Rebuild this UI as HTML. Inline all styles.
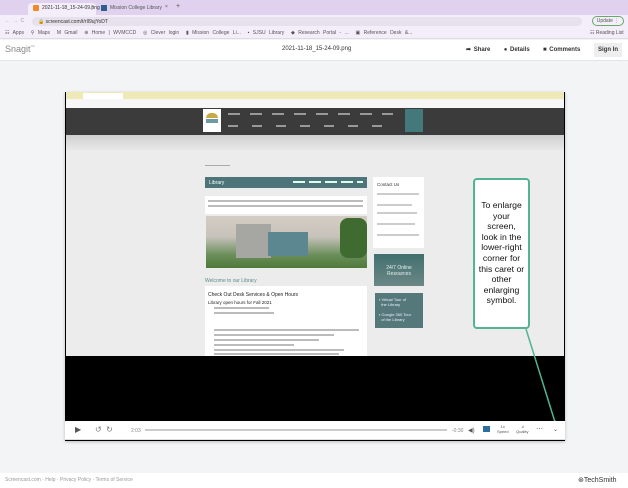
<!DOCTYPE html>
<html><head><meta charset="utf-8"><style>
*{margin:0;padding:0;box-sizing:border-box}
body{width:628px;height:488px;overflow:hidden;background:#f3f4f6;font-family:"Liberation Sans",sans-serif;position:relative}
.a{position:absolute}
.t{font-size:5px;color:#555;white-space:nowrap}
.g{background:#bbb;height:1.5px}
</style></head><body>
<div class="a" style="left:0;top:0;width:628px;height:15px;background:#e0d2ee"></div>
<div class="a" style="left:28px;top:3px;width:68px;height:12px;background:#f4eefa;border-radius:4px 4px 0 0"></div>
<div class="a" style="left:33px;top:5px;width:6px;height:6px;background:#f08a24;border-radius:1px"></div>
<div class="a t" style="left:42px;top:5px;color:#333">2021-11-18_15-24-09.png</div>
<div class="a t" style="left:91px;top:4px">×</div>
<div class="a" style="left:101px;top:5px;width:6px;height:6px;background:#2d5f8a"></div>
<div class="a t" style="left:110px;top:5px">Mission College Library</div>
<div class="a t" style="left:165px;top:4px">×</div>
<div class="a t" style="left:176px;top:3px;font-size:7px">+</div>
<div class="a" style="left:0;top:15px;width:628px;height:13px;background:#f4eefa"></div>
<div class="a t" style="left:5px;top:18px;color:#999">←&nbsp; →&nbsp; C</div>
<div class="a" style="left:32px;top:17px;width:550px;height:9px;background:#e6e1ea;border-radius:5px"></div>
<div class="a t" style="left:38px;top:19px;color:#333">🔒 screencast.com/t/rIl9ujYoDT</div>
<div class="a" style="left:592px;top:16px;width:32px;height:10px;border:1px solid #6a6;border-radius:5px;font-size:5px;color:#555;text-align:center;line-height:8px">Update ⋮</div>
<div class="a" style="left:0;top:28px;width:628px;height:11px;background:#f4eefa;border-bottom:1px solid #ddd"></div>
<div class="a t" style="left:5px;top:30px;word-spacing:2px">☷ Apps &nbsp;⚲ Maps &nbsp;M Gmail &nbsp;⊕ Home | WVMCCD &nbsp;◎ Clever login &nbsp;▮ Mission College Li... &nbsp;▪ SJSU Library &nbsp;◆ Research Portal - ... &nbsp;▣ Reference Desk &amp;...</div>
<div class="a t" style="left:590px;top:30px">☷ Reading List</div>
<div class="a" style="left:0;top:40px;width:628px;height:21px;background:#fff;border-bottom:1px solid #e5e5e5"></div>
<div class="a" style="left:5px;top:44px;font-size:9px;color:#888">Snagit<sup style="font-size:4px">™</sup></div>
<div class="a" style="left:282px;top:46px;font-size:6px;color:#333">2021-11-18_15-24-09.png</div>
<div class="a" style="left:466px;top:46px;font-size:6px;color:#333;font-weight:bold;word-spacing:1px">➦ Share &nbsp;&nbsp;&nbsp;&nbsp;● Details &nbsp;&nbsp;&nbsp;&nbsp;■ Comments</div>
<div class="a" style="left:594px;top:43px;width:28px;height:14px;background:#eee;font-size:6px;color:#333;font-weight:bold;text-align:center;line-height:14px">Sign In</div>
<div class="a" style="left:65px;top:92px;width:500px;height:349px;background:#000;box-shadow:0 1px 3px #bbb"></div>
<div class="a" style="left:66px;top:92px;width:498px;height:7px;background:#efe9b8"></div>
<div class="a" style="left:83px;top:93px;width:40px;height:6px;background:#fff"></div>
<div class="a" style="left:66px;top:99px;width:498px;height:9px;background:#f6f6f6"></div>
<div class="a" style="left:66px;top:108px;width:498px;height:27px;background:#3b3b3b"></div>
<div class="a" style="left:66px;top:135px;width:498px;height:15px;background:linear-gradient(#cfcfcf,#e8e8e8)"></div>
<div class="a" style="left:66px;top:150px;width:498px;height:206px;background:#ececec"></div>
<div class="a" style="left:203px;top:109px;width:18px;height:23px;background:#fff"></div>
<div class="a" style="left:206px;top:113px;width:12px;height:5px;background:#c9a944;border-radius:6px 6px 0 0"></div>
<div class="a" style="left:206px;top:119px;width:12px;height:4px;background:#6f9aa0"></div>
<div class="a" style="left:228px;top:113px;width:165px;height:1.5px;background:repeating-linear-gradient(90deg,#999 0 12px,transparent 12px 22px)"></div>
<div class="a" style="left:228px;top:125px;width:165px;height:1.5px;background:repeating-linear-gradient(90deg,#999 0 10px,transparent 10px 24px)"></div>
<div class="a" style="left:405px;top:109px;width:18px;height:23px;background:#43797a"></div>
<div class="a" style="left:205px;top:165px;width:25px;height:1px;background:#aaa"></div>
<div class="a" style="left:205px;top:177px;width:162px;height:11px;background:#4c7479"></div>
<div class="a" style="left:209px;top:180px;font-size:5px;color:#fff">Library</div>
<div class="a" style="left:293px;top:181px;width:70px;height:2px;background:repeating-linear-gradient(90deg,#dfe 0 12px,transparent 12px 16px)"></div>
<div class="a" style="left:205px;top:196px;width:162px;height:18px;background:#fff"></div>
<div class="a g" style="left:208px;top:200px;width:155px"></div>
<div class="a g" style="left:208px;top:205px;width:155px"></div>
<div class="a" style="left:206px;top:216px;width:161px;height:52px;background:linear-gradient(180deg,#d4cdc3 0,#c7c2bb 40%,#6a8e5a 75%,#4f7a3a 100%)"></div>
<div class="a" style="left:236px;top:224px;width:35px;height:34px;background:#a6a6a2"></div>
<div class="a" style="left:268px;top:232px;width:40px;height:24px;background:#5d8790"></div>
<div class="a" style="left:340px;top:218px;width:27px;height:40px;background:#3f6a30;border-radius:8px"></div>
<div class="a" style="left:205px;top:278px;font-size:5px;color:#5b8a8f">Welcome to our Library</div>
<div class="a" style="left:205px;top:286px;width:162px;height:70px;background:#fff"></div>
<div class="a" style="left:208px;top:292px;font-size:5px;color:#222">Check Out Desk Services &amp; Open Hours</div>
<div class="a" style="left:208px;top:300px;font-size:4.5px;color:#222">Library open hours for Fall 2021</div>
<div class="a g" style="left:214px;top:307px;width:55px"></div>
<div class="a g" style="left:214px;top:312px;width:60px"></div>
<div class="a g" style="left:214px;top:329px;width:145px"></div>
<div class="a g" style="left:214px;top:334px;width:120px"></div>
<div class="a g" style="left:214px;top:339px;width:105px"></div>
<div class="a g" style="left:214px;top:344px;width:80px"></div>
<div class="a g" style="left:214px;top:349px;width:130px"></div>
<div class="a g" style="left:214px;top:353px;width:125px"></div>
<div class="a" style="left:373px;top:177px;width:51px;height:71px;background:#fff"></div>
<div class="a" style="left:377px;top:182px;font-size:4.5px;color:#333">Contact Us</div>
<div class="a g" style="left:377px;top:193px;width:42px;background:#ccc"></div>
<div class="a g" style="left:377px;top:204px;width:35px;background:#ccc"></div>
<div class="a g" style="left:377px;top:212px;width:40px;background:#ccc"></div>
<div class="a g" style="left:377px;top:223px;width:38px;background:#ccc"></div>
<div class="a g" style="left:377px;top:234px;width:42px;background:#ccc"></div>
<div class="a" style="left:374px;top:254px;width:50px;height:32px;background:linear-gradient(#41706f,#6c8786)"></div>
<div class="a" style="left:374px;top:265px;width:50px;font-size:5px;color:#e6f0ee;text-align:center;line-height:6px">24/7 Online<br>Resources</div>
<div class="a" style="left:375px;top:293px;width:48px;height:35px;background:#55797b"></div>
<div class="a" style="left:379px;top:297px;font-size:4px;color:#eef;line-height:5px">▪ Virtual Tour of<br>&nbsp; the Library<br><br>▪ Google 360 Tour<br>&nbsp; of the Library</div>
<div class="a" style="left:473px;top:178px;width:57px;height:151px;background:#fff;border:2px solid #53b394;border-radius:4px"></div>
<div class="a" style="left:463px;top:200px;width:77px;font-size:8.7px;line-height:10.6px;color:#111;text-align:center;white-space:nowrap">To enlarge<br>your<br>screen,<br>look in the<br>lower-right<br>corner for<br>this caret or<br>other<br>enlarging<br>symbol.</div>
<svg class="a" style="left:0;top:0" width="628" height="488"><line x1="526" y1="329" x2="555" y2="422" stroke="#53b394" stroke-width="1.5"/><circle cx="555" cy="422" r="1.5" fill="#53b394"/></svg>
<div class="a" style="left:65px;top:421px;width:500px;height:19px;background:#fff;border-bottom:1px solid #ddd"></div>
<div class="a" style="left:75px;top:425px;font-size:8px;color:#555">▶</div>
<div class="a" style="left:95px;top:425px;font-size:8px;color:#777">↺ &nbsp;↻</div>
<div class="a t" style="left:131px;top:428px;color:#888">2:03</div>
<div class="a" style="left:145px;top:429px;width:302px;height:2px;background:#ccc"></div>
<div class="a t" style="left:452px;top:428px;color:#888">-0:30</div>
<div class="a t" style="left:468px;top:427px;font-size:6px">◀)</div>
<div class="a" style="left:483px;top:426px;width:7px;height:6px;background:#2f6fa0"></div>
<div class="a t" style="left:497px;top:424px;font-size:4px;text-align:center;line-height:5px">1x<br>Speed</div>
<div class="a t" style="left:516px;top:424px;font-size:4px;text-align:center;line-height:5px">.ıl<br>Quality</div>
<div class="a t" style="left:536px;top:425px;font-size:7px">⋯</div>
<div class="a t" style="left:553px;top:426px;font-size:6px">⌄</div>
<div class="a" style="left:0;top:473px;width:628px;height:15px;background:#fff"></div>
<div class="a t" style="left:5px;top:477px;color:#999">Screencast.com · Help · Privacy Policy · Terms of Service</div>
<div class="a" style="left:578px;top:476px;font-size:7px;color:#333">⊛TechSmith</div>
</body></html>
